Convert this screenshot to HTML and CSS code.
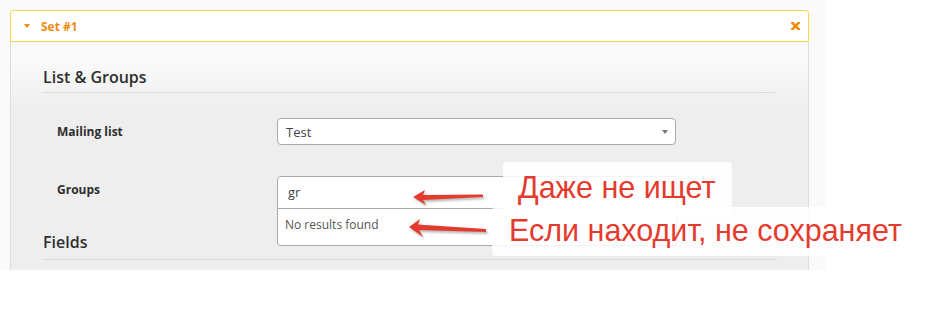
FILE: index.html
```html
<!DOCTYPE html>
<html>
<head>
<meta charset="utf-8">
<link rel="stylesheet" href="styles.css">
</head>
<body>
<div class="stage">
  <div class="screen">
    <div class="panel">
      <div class="panel-head">
        <span class="caret"></span>
        <span class="title">Set #1</span>
        <svg class="close" width="9" height="8" viewBox="0 0 9 8"><path d="M1 0.5 L8 7.5 M8 0.5 L1 7.5" stroke="#ef8c0e" stroke-width="2.6" stroke-linecap="square"/></svg>
      </div>
      <div class="panel-body">
        <h3 class="section">List &amp; Groups</h3>
        <div class="row row-list">
          <div class="label">Mailing list</div>
          <div class="select">
            <span>Test</span>
            <span class="select-arrow"></span>
          </div>
        </div>
        <div class="row row-groups">
          <div class="label label-top">Groups</div>
          <div class="chosen">
            <div class="chosen-input">gr</div>
            <div class="chosen-drop">No results found</div>
          </div>
        </div>
        <h3 class="section section-fields">Fields</h3>
      </div>
    </div>
  </div>

  <div class="note note-1"></div>
  <div class="note note-2"></div>
  <div class="note-text note-text-1">Даже не ищет</div>
  <div class="note-text note-text-2">Если находит, не сохраняет</div>

  <svg class="arrow arrow-1" width="80" height="24" viewBox="0 0 80 24">
    <defs><filter id="sh1" x="-10%" y="-50%" width="120%" height="200%"><feGaussianBlur stdDeviation="0.8"/></filter></defs>
    <polygon transform="translate(1.5,2)" filter="url(#sh1)" fill="#888" opacity="0.6" points="5,11 17,4 15,9 75,8.5 75,11 15,14 18,19"/>
    <polygon fill="#e53a2e" points="5,11 17,4 15,9 75,8.5 75,11 15,14 18,19"/>
  </svg>
  <svg class="arrow arrow-2" width="88" height="26" viewBox="0 0 88 26">
    <defs><filter id="sh2" x="-10%" y="-50%" width="120%" height="200%"><feGaussianBlur stdDeviation="0.8"/></filter></defs>
    <polygon transform="translate(1.5,2)" filter="url(#sh2)" fill="#888" opacity="0.6" points="5,11 16,3 14,8.5 82,13 82,16 15,14 19,21"/>
    <polygon fill="#e53a2e" points="5,11 16,3 14,8.5 82,13 82,16 15,14 19,21"/>
  </svg>
</div>
</body>
</html>
```

FILE: styles.css
```css
html, body {
  margin: 0;
  padding: 0;
  background: #ffffff;
}

.stage {
  position: relative;
  width: 935px;
  height: 314px;
}

.screen {
  width: 825px;
  height: 270px;
  background: #fafafa;
  padding: 10px 16px 0 10px;
  box-sizing: border-box;
  overflow: hidden;
  font-family: "Open Sans", "Liberation Sans", sans-serif;
}

.panel {
  width: 799px;
}

.panel-head {
  height: 30px;
  background: #ffffff;
  border: 1px solid #f6d64e;
  border-radius: 3px 3px 0 0;
  display: flex;
  align-items: center;
  padding: 0 8px 0 13px;
}

.caret {
  width: 0;
  height: 0;
  border-left: 3.5px solid transparent;
  border-right: 3.5px solid transparent;
  border-top: 4px solid #ef8c0e;
  margin-right: 11px;
  margin-top: -1px;
}

.title {
  color: #ef8c0e;
  font-weight: 700;
  font-size: 12px;
  flex: 1;
}

.close {
  display: block;
}

.panel-body {
  background: linear-gradient(#f9f9f9 0px, #f9f9f9 20px, #eeeeee 70px, #eeeeee 100%);
  border-left: 1px solid #dddddd;
  border-right: 1px solid #dddddd;
  padding: 24px 31px 20px 32px;
  height: 240px;
}

.section {
  margin: 0;
  font-size: 16px;
  line-height: 22px;
  font-weight: 600;
  color: #2e2e2e;
  padding-bottom: 4px;
  border-bottom: 1px solid #dadada;
}

.section-fields {
  margin-top: 23px;
  padding-bottom: 6px;
}

.row {
  display: flex;
  padding-left: 14px;
}

.row-list {
  margin-top: 25px;
  height: 27px;
  align-items: center;
}

.row-groups {
  margin-top: 31px;
  height: 32px;
}

.label {
  width: 220px;
  font-size: 12px;
  font-weight: 700;
  color: #2e2e2e;
}

.label-top {
  line-height: 28px;
}

.select {
  width: 382px;
  height: 25px;
  background: #ffffff;
  border: 1px solid #aaaaaa;
  border-radius: 4px;
  display: flex;
  align-items: center;
  justify-content: space-between;
  padding: 0 7px 0 8px;
  box-sizing: content-box;
  font-size: 13px;
  color: #444444;
}

.select-arrow {
  width: 0;
  height: 0;
  border-left: 3.5px solid transparent;
  border-right: 3.5px solid transparent;
  border-top: 4px solid #777777;
}

.chosen {
  position: relative;
  width: 400px;
}

.chosen-input {
  height: 31px;
  background: #ffffff;
  border: 1px solid #aaaaaa;
  border-radius: 4px 4px 0 0;
  font-size: 13px;
  line-height: 31px;
  color: #444444;
  padding-left: 10px;
}

.chosen-drop {
  position: absolute;
  left: 0;
  right: 0;
  top: 32px;
  height: 36px;
  background: #ffffff;
  border: 1px solid #aaaaaa;
  border-radius: 0 0 4px 4px;
  font-size: 12px;
  line-height: 32px;
  color: #555555;
  padding-left: 7px;
  z-index: 1;
}

.note {
  position: absolute;
  background: rgba(255, 255, 255, 0.86);
  border-radius: 4px;
  z-index: 2;
}

.note-1 {
  left: 503px;
  top: 162px;
  width: 229px;
  height: 54px;
}

.note-2 {
  left: 492px;
  top: 207px;
  width: 420px;
  height: 49px;
}

.note-text {
  position: absolute;
  z-index: 3;
  font-family: "Liberation Sans", Arial, sans-serif;
  color: #e53a2e;
  white-space: nowrap;
  line-height: 1;
  font-size: 30.5px;
}

.note-text-1 {
  left: 518px;
  top: 172px;
}

.note-text-2 {
  left: 509px;
  top: 215px;
}

.arrow {
  position: absolute;
  z-index: 3;
  display: block;
}

.arrow-1 {
  left: 408px;
  top: 186px;
}

.arrow-2 {
  left: 404px;
  top: 216px;
}
```
